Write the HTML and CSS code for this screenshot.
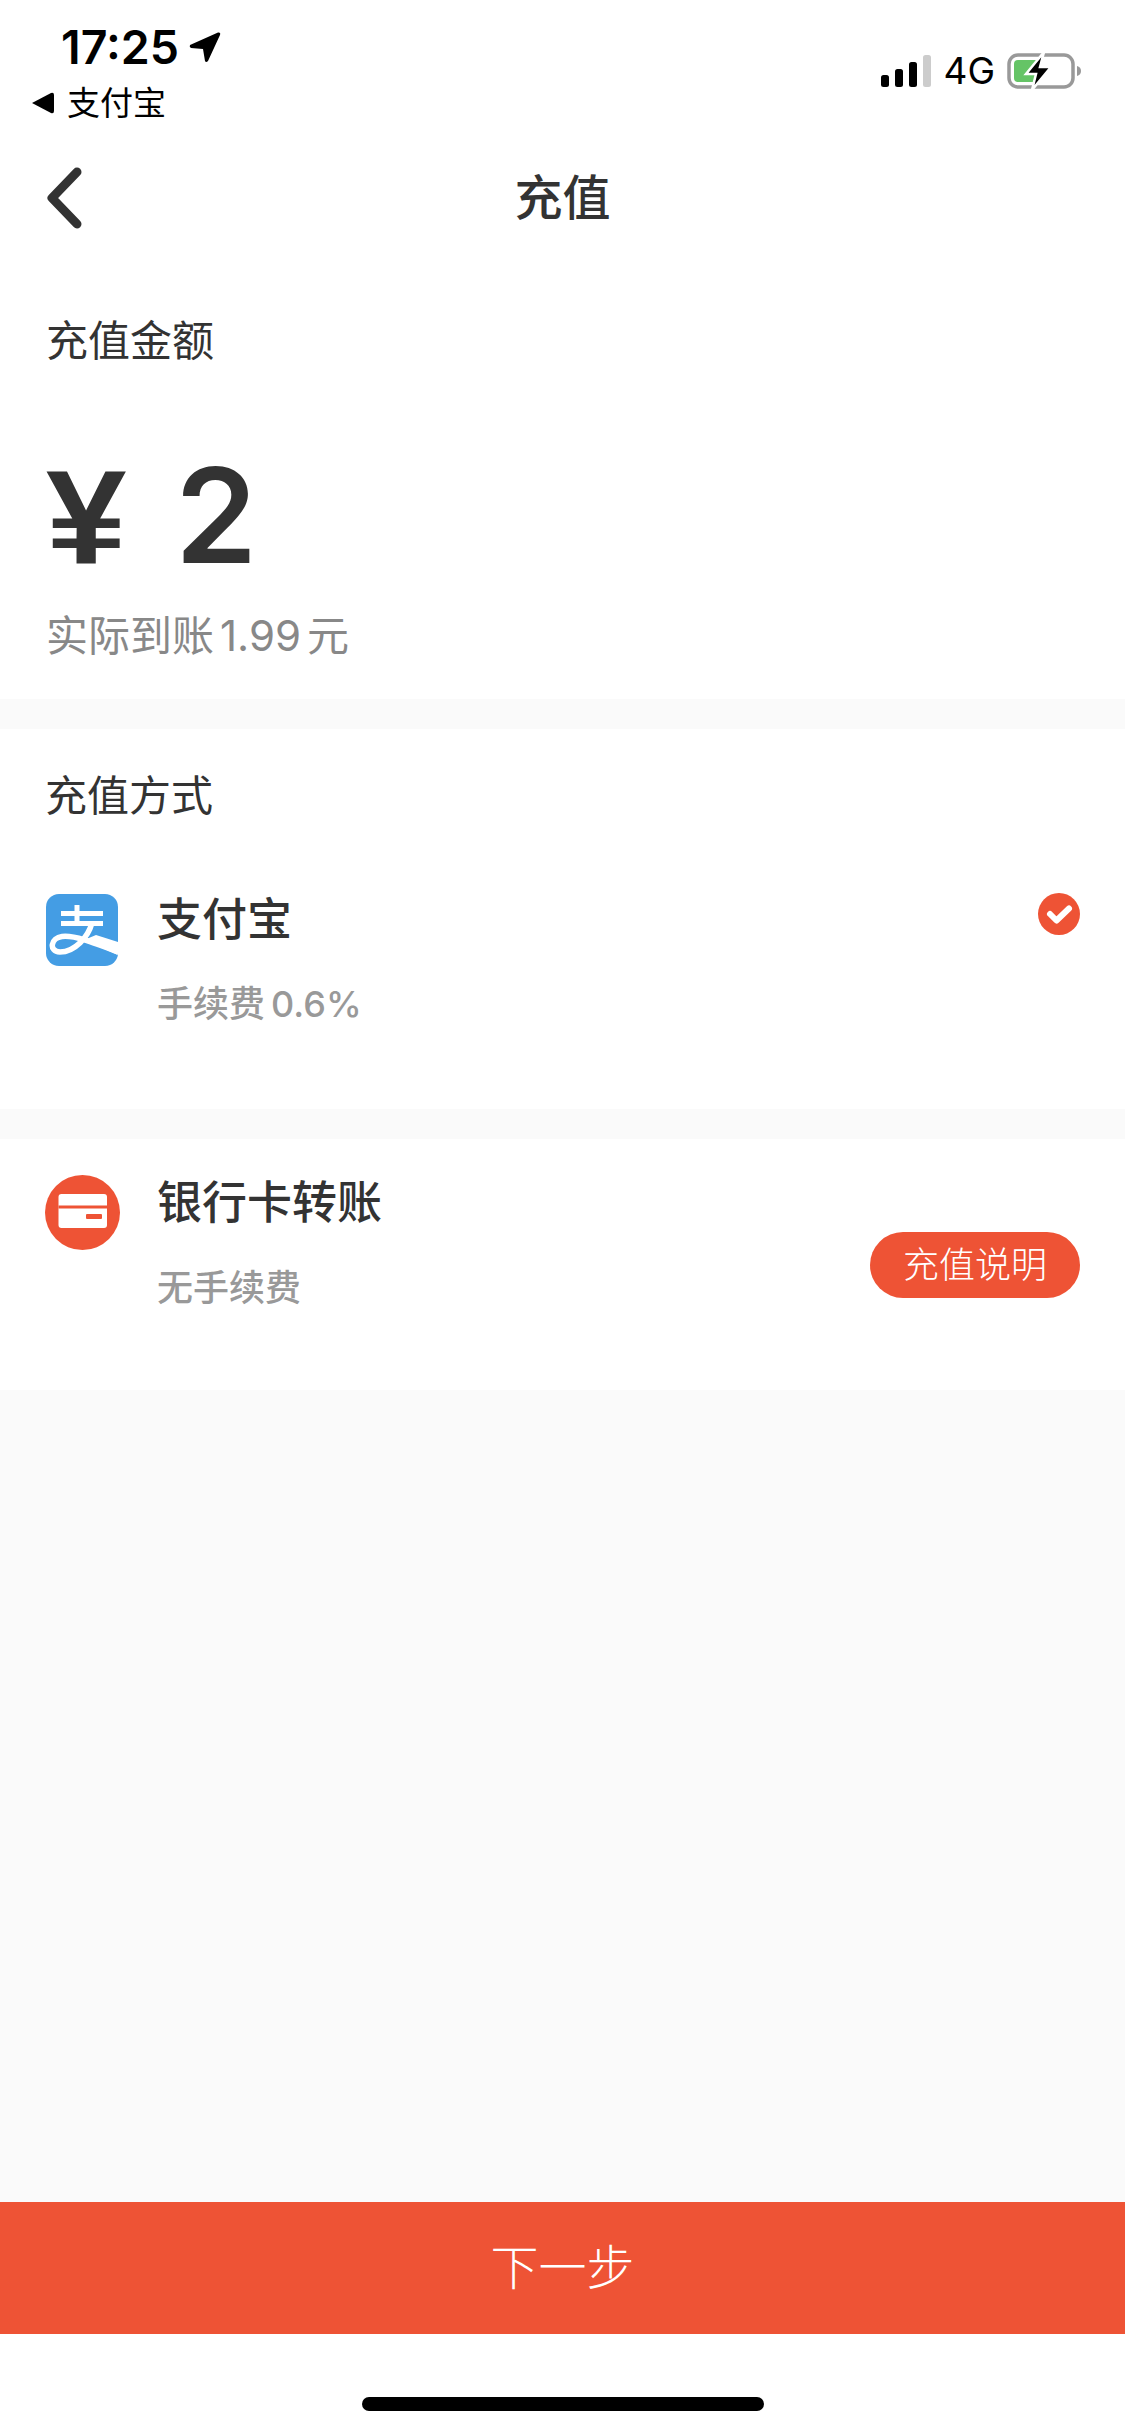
FILE: index.html
```html
<!DOCTYPE html>
<html lang="zh-CN">
<head>
    <meta charset="UTF-8">
    <meta name="viewport" content="width=device-width, initial-scale=1.0">
    <title>充值</title>
    <link rel="stylesheet" href="styles.css">
</head>
<body>
    <div class="page">
        <div class="status">
            <div class="status-left">
                <div class="clock">
                    <span>17:25</span>
                    <svg class="arrow" width="32" height="32" viewBox="0 0 32 32"><path d="M1 14 L29 1.500 Q32 1 31 4 L19 30 Q17 32 16 30 L14 18 L2 17 Q0 16 1 14 Z" fill="#000"/></svg>
                </div>
                <div class="back-app">
                    <svg width="22" height="22" viewBox="0 0 22 22"><path d="M0 11 L19 1 Q22 0 22 3 V19 Q22 22 19 21 Z" fill="#000"/></svg>
                    <span>支付宝</span>
                </div>
            </div>
            <div class="status-right">
                <svg class="signal" width="50" height="32" viewBox="0 0 50 32">
                    <rect x="0" y="20" width="8" height="12" rx="2.500" fill="#000"/>
                    <rect x="14" y="14" width="8" height="18" rx="2.500" fill="#000"/>
                    <rect x="28" y="7" width="8" height="25" rx="2.500" fill="#000"/>
                    <rect x="42" y="0" width="8" height="32" rx="2.500" fill="#ccc"/>
                </svg>
                <span class="net">4G</span>
                <svg width="76" height="36" viewBox="0 0 76 36">
                    <rect x="2" y="2" width="64" height="32" rx="9" fill="none" stroke="#999" stroke-width="3.500"/>
                    <path d="M70 13 Q74 14 74 18 Q74 22 70 23 Z" fill="#999"/>
                    <rect x="7" y="7" width="27" height="22" rx="4" fill="#65c466"/>
                    <path d="M37 -1 L19 21 H29 L25 37 L44 14 H33 Z" fill="#000" stroke="#fff" stroke-width="2.500"/>
                </svg>
            </div>
        </div>

        <div class="nav">
            <svg class="nav-back" width="36" height="62" viewBox="0 0 36 62"><path d="M31 5 L6 31 L31 57" fill="none" stroke="#333" stroke-width="9" stroke-linecap="round" stroke-linejoin="round"/></svg>
            <div class="nav-title">充值</div>
        </div>

        <div class="amount-box">
            <div class="label">充值金额</div>
            <div class="amount"><span class="yen">¥</span><span>2</span></div>
            <div class="received">实际到账<span class="num">1.99</span>元</div>
        </div>

        <div class="method-head">
            <div class="label">充值方式</div>
            <div class="method">
                <svg class="method-icon" width="72" height="72" viewBox="0 0 72 72">
                    <defs><clipPath id="ali"><rect width="72" height="72" rx="13"/></clipPath></defs>
                    <g clip-path="url(#ali)">
                        <rect width="72" height="72" fill="#449de4"/>
                        <path d="M15 19.500 H57 M15 29.500 H57 M31 11 V31" stroke="#fff" stroke-width="5" fill="none"/>
                        <path d="M46 29 C42 43 29 58 14 58 C2 57 5 44 16 42.500 C28 41 46 48 72 58" stroke="#fff" stroke-width="5.500" fill="none"/>
                        <path d="M50 41 L72 48 V61 L38 46 Z" fill="#fff"/>
                    </g>
                </svg>
                <div class="method-text">
                    <div class="method-name">支付宝</div>
                    <div class="method-fee">手续费<span class="num">0.6%</span></div>
                </div>
                <svg class="check" width="42" height="42" viewBox="0 0 42 42">
                    <circle cx="21" cy="21" r="21" fill="#ee5335"/>
                    <path d="M12 21 L18.500 27.500 L31 15.500" fill="none" stroke="#fff" stroke-width="6" stroke-linecap="round" stroke-linejoin="round"/>
                </svg>
            </div>
        </div>

        <div class="bank">
            <svg class="bank-icon" width="75" height="75" viewBox="0 0 75 75">
                <circle cx="37.500" cy="37.500" r="37.500" fill="#ee5335"/>
                <rect x="13.500" y="19" width="48.500" height="34" rx="3" fill="#fff"/>
                <rect x="13.500" y="30.500" width="48.500" height="3" fill="#ee5335"/>
                <rect x="41" y="39" width="16" height="5" rx="1" fill="#ee5335"/>
            </svg>
            <div class="method-text">
                <div class="method-name">银行卡转账</div>
                <div class="method-fee">无手续费</div>
            </div>
            <div class="pill">充值说明</div>
        </div>

        <div class="filler"></div>
        <div class="next">下一步</div>
        <div class="home"><div class="home-bar"></div></div>
    </div>
</body>
</html>
```

FILE: styles.css
```css
* {
    box-sizing: border-box;
}
body {
    margin: 0;
    font-family: Inter, "Noto Sans CJK SC", sans-serif;
    color: #333;
    background: #fff;
}
.page {
    width: 1125px;
    height: 2436px;
    display: flex;
    flex-direction: column;
}

/* status bar */
.status {
    height: 130px;
    display: flex;
    justify-content: space-between;
    padding: 24px 42px 0 32px;
    color: #000;
}
.clock {
    display: flex;
    align-items: center;
    gap: 10px;
    height: 46px;
    padding-left: 29px;
    font-size: 46.500px;
    font-weight: 600;
}
.back-app {
    display: flex;
    align-items: center;
    gap: 13px;
    margin-top: 13px;
    font-size: 33px;
    line-height: 40px;
}
.status-right {
    display: flex;
    align-items: center;
    height: 94px;
    gap: 12px;
}
.net {
    font-size: 37px;
    line-height: 40px;
}

/* nav */
.nav {
    height: 135px;
    padding-bottom: 8px;
    display: flex;
    align-items: center;
    justify-content: center;
    position: relative;
}
.nav-back {
    position: absolute;
    left: 46px;
    top: 37px;
}
.nav-title {
    font-size: 48px;
    font-weight: 500;
}

/* amount */
.amount-box {
    padding: 46px 46px 0;
    height: 464px;
    border-bottom: 30px solid #fafafa;
}
.label {
    font-size: 42px;
    line-height: 60px;
}
.amount {
    display: flex;
    align-items: baseline;
    gap: 45px;
    margin-top: 64px;
    font-size: 132px;
    font-weight: 600;
    line-height: 160px;
}
.yen {
    font-family: "Liberation Sans", sans-serif;
    font-weight: 700;
    font-size: 134px;
    width: 84px;
    transform: scaleX(1.08);
    transform-origin: left;
}
.received {
    margin-top: 9px;
    font-size: 42px;
    line-height: 60px;
    color: #888;
}
.received .num {
    margin: 0 6px;
}

/* pay methods */
.method-head {
    padding: 37px 45px 0;
    height: 410px;
    border-bottom: 30px solid #fafafa;
}
.method {
    display: flex;
    align-items: flex-start;
    gap: 40px;
    margin-top: 68px;
    position: relative;
}
.method-icon {
    margin-left: 1px;
}
.method-text {
    flex: 1;
    margin-left: -1px;
}
.method-name {
    font-size: 45px;
    font-weight: 500;
    line-height: 56px;
    margin-top: -2px;
}
.method-fee {
    font-size: 36px;
    font-weight: 500;
    line-height: 50px;
    color: #999;
    margin-top: 31px;
}
.method-fee .num {
    margin-left: 6px;
}
.check {
    margin-top: -1px;
}
.bank {
    height: 251px;
    padding: 36px 45px 0;
    display: flex;
    align-items: flex-start;
    gap: 38px;
    position: relative;
}
.bank .method-text {
    margin-top: 2px;
}
.bank .method-fee {
    margin-top: 32px;
}
.pill {
    width: 210px;
    height: 66px;
    margin-top: 57px;
    border-radius: 33px;
    background: #ee5335;
    color: #fff;
    font-size: 36px;
    font-weight: 300;
    line-height: 66px;
    text-align: center;
}

/* bottom */
.filler {
    flex: 1;
    background: #fafafa;
}
.next {
    height: 132px;
    background: #ee5335;
    color: #fff;
    font-size: 48px;
    font-weight: 300;
    line-height: 132px;
    text-align: center;
}
.home {
    height: 102px;
    display: flex;
    justify-content: center;
    padding-top: 63px;
}
.home-bar {
    width: 402px;
    height: 14px;
    border-radius: 7px;
    background: #000;
}
```
